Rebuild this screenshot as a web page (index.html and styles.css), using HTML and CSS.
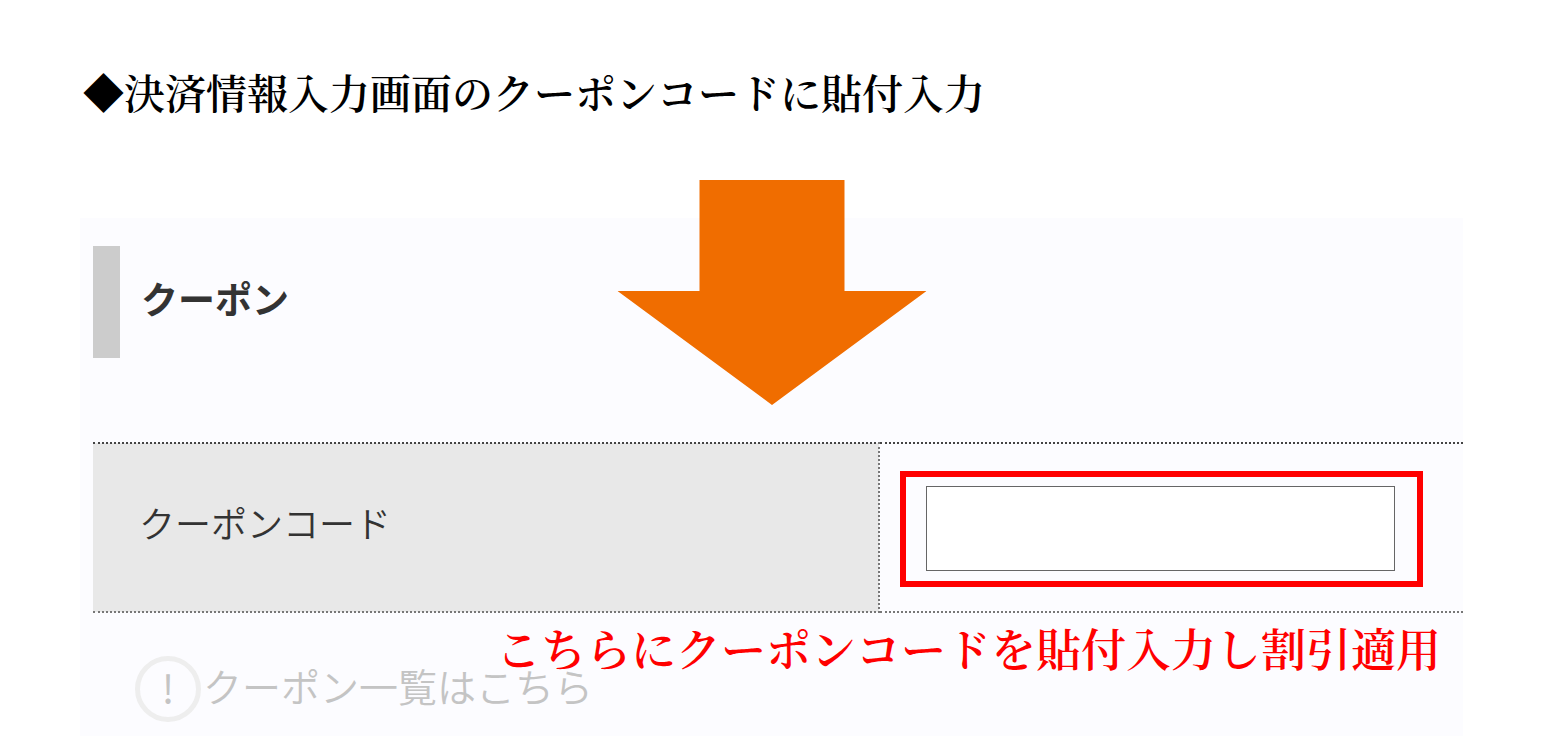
FILE: index.html
```
<!DOCTYPE html>
<html lang="ja">
<head>
    <meta charset="UTF-8">
    <meta name="viewport" content="width=device-width, initial-scale=1.0">
    <title>クーポンコードの入力</title>
    <link rel="stylesheet" href="styles.css">
</head>
<body>
    <h1 class="guide-title">◆決済情報入力画面のクーポンコードに貼付入力</h1>

    <main class="panel">
        <svg class="arrow" viewBox="0 0 309 225" aria-hidden="true">
            <path d="M82 0H227V111H309L154.500 225L0 111H82Z" fill="#f06d00"/>
        </svg>

        <h2 class="section-title">クーポン</h2>

        <table class="coupon-table">
            <tr>
                <th scope="row"><label for="coupon-code">クーポンコード</label></th>
                <td>
                    <div class="highlight">
                        <input type="text" id="coupon-code" class="code-input">
                    </div>
                </td>
            </tr>
        </table>

        <p class="note">こちらにクーポンコードを貼付入力し割引適用</p>

        <a href="#" class="coupon-list">
            <span class="mark">!</span>
            <span class="coupon-list-text">クーポン一覧はこちら</span>
        </a>
    </main>
</body>
</html>
```
FILE: styles.css
```
* {
    box-sizing: border-box;
}

body {
    margin: 0;
    min-height: 100vh;
    display: flex;
    flex-direction: column;
    background-color: #fff;
    color: #333;
    font-family: "Noto Sans CJK JP", sans-serif;
}

.guide-title {
    margin: 0;
    padding: 62px 80px 96px 83px;
    color: #000;
    font-family: "Noto Serif CJK JP", "Noto Sans CJK JP", serif;
    font-size: 41px;
    font-weight: 600;
    line-height: 60px;
}

.panel {
    position: relative;
    flex: 1;
    margin: 0 80px;
    padding: 28px 0 0 13px;
    background-color: #fcfcff;
}

/* panel の上に重ねる矢印 */
.arrow {
    position: absolute;
    top: -38px;
    left: 50%;
    width: 309px;
    transform: translateX(-50%);
}

.section-title {
    margin: 0 0 84px;
    padding: 0 0 8px 21px;
    border-left: 27px solid #ccc;
    font-size: 37px;
    font-weight: 700;
    line-height: 104px;
}

.coupon-table {
    width: 100%;
    border-collapse: collapse;
}

.coupon-table th,
.coupon-table td {
    height: 169px;
    padding: 0;
    border-top: 2px dotted #444;
    border-bottom: 2px dotted #777;
}

.coupon-table th {
    width: 57.4%;
    padding: 0 0 12px 46px;
    border-right: 2px dotted #777;
    background-color: #e8e8e8;
    font-size: 36px;
    font-weight: 350;
    text-align: left;
}

.coupon-table td {
    padding: 2px 40px 0 20px;
}

.highlight {
    padding: 9px 22px 10px 20px;
    border: 6px solid #f00;
}

.code-input {
    display: block;
    width: 100%;
    height: 85px;
    padding: 0 16px;
    border: 1px solid #666;
    background-color: #fff;
    font-family: inherit;
    font-size: 36px;
}

.note {
    position: absolute;
    top: 400px;
    right: 22px;
    margin: 0;
    color: #f00;
    font-family: "Noto Serif CJK JP", "Noto Sans CJK JP", serif;
    font-size: 45px;
    font-weight: 600;
    line-height: 60px;
    white-space: nowrap;
}

.coupon-list {
    display: flex;
    align-items: center;
    gap: 2px;
    padding: 43px 0 14px 42px;
    color: #c4c4c4;
    font-size: 39px;
    font-weight: 350;
    line-height: 58px;
    text-decoration: none;
}

.coupon-list-text {
    padding-bottom: 8px;
}

.mark {
    width: 66px;
    height: 66px;
    border: 5px solid #eee;
    border-radius: 50%;
    font-weight: 400;
    line-height: 52px;
    text-align: center;
}
```
